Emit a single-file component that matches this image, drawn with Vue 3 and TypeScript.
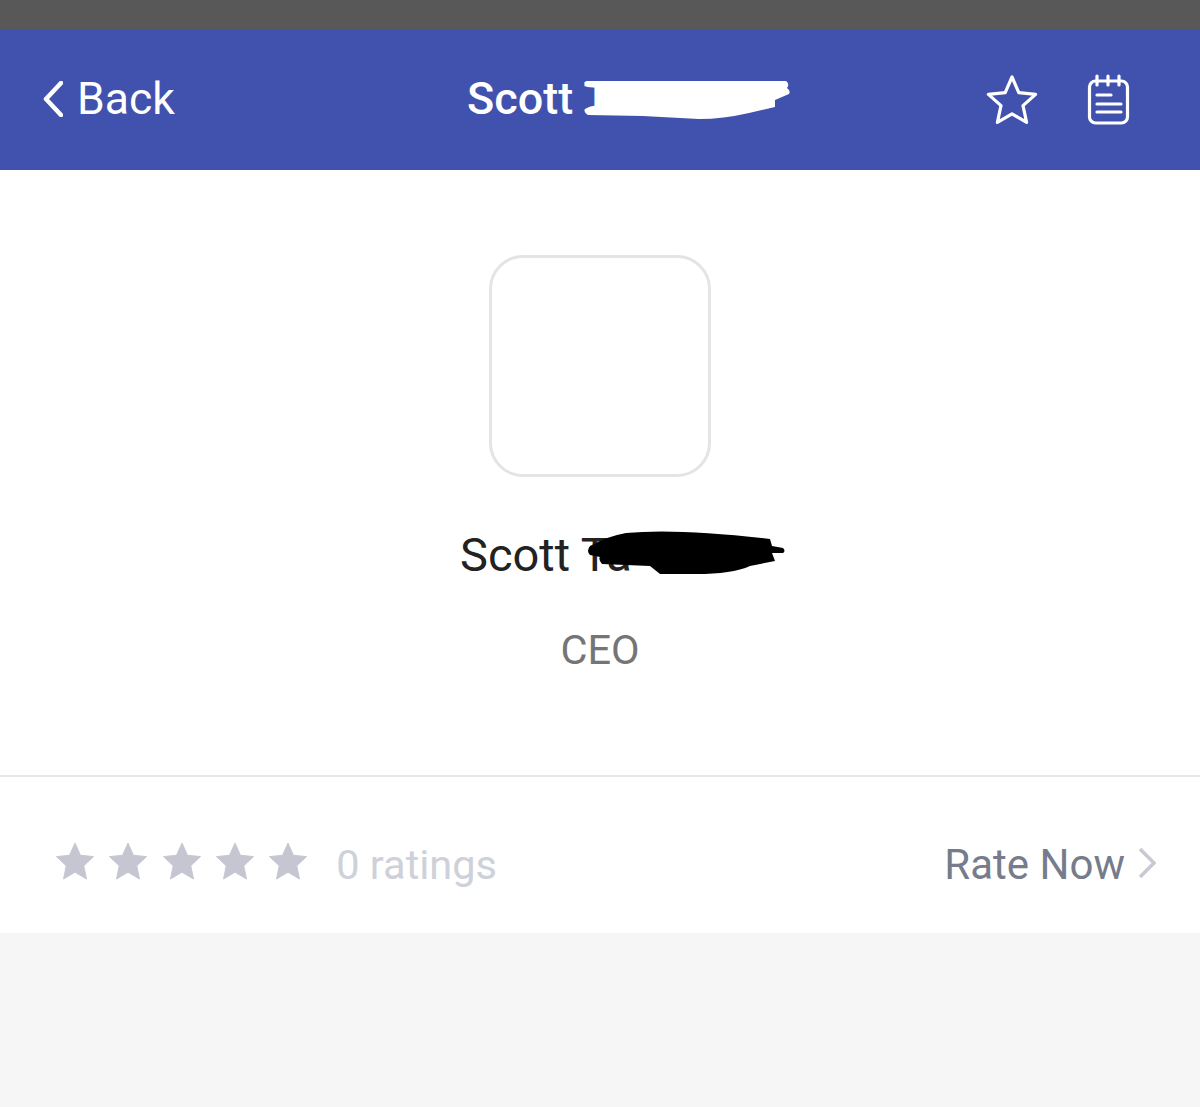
<script setup lang="ts">
const stars: number[] = [1, 2, 3, 4, 5];
const starPath = 'M20 1 L25.6 13.6 L39 15 L29 24.4 L31.8 38 L20 31 L8.2 38 L11 24.4 L1 15 L14.4 13.6 Z';
</script>

<template>
  <div class="page">
    <div class="status-bar"></div>

    <header class="nav">
      <div class="back">
        <svg class="back-icon" width="20" height="36" viewBox="0 0 20 36">
          <path d="M18 2 L3 18 L18 34" />
        </svg>
        <span>Back</span>
      </div>
      <div class="title">
        Scott T
        <!-- redaction scribble from the original screenshot -->
        <svg class="scribble" width="210" height="42" viewBox="0 0 210 42">
          <path class="fill-white" d="M3 2 H203 Q207 5 204 9 H204 Q208 12 206 15 L192 21 L192 28 L166 34 Q140 40 116 40 L60 37 L5 36 Q0 33 2 30 Q6 27 16 26 V9 L4 8 Q0 5 3 2 Z" />
        </svg>
      </div>
      <div class="actions">
        <svg width="54" height="52" viewBox="0 0 54 52">
          <path class="outline" d="M27 3 L33.8 18.6 L50.6 20.4 L38 31.6 L41.6 48.4 L27 39.8 L12.4 48.4 L16 31.6 L3.4 20.4 L20.2 18.6 Z" />
        </svg>
        <svg width="44" height="52" viewBox="0 0 44 52">
          <rect class="outline" x="3.5" y="7" width="38" height="42" rx="6" />
          <path class="outline" d="M11 2 V11 M22 2 V11 M33 2 V11 M11 21 H25 M11 30 H35 M11 38 H35" />
        </svg>
      </div>
    </header>

    <section class="profile">
      <div class="avatar"></div>
      <div class="name">
        Scott Ta
        <svg class="scribble" width="202" height="46" viewBox="0 0 202 46">
          <path class="fill-black" d="M4 17 Q22 7 40 4 Q90 -1 184 10 L186 17 L197 19 Q200 22 197 24 L186 24 L189 32 L164 37 Q146 45 110 45 L74 45 L64 37 L16 35 Q12 30 14 28 L4 26 Q0 22 4 17 Z" />
        </svg>
      </div>
      <div class="role">CEO</div>
    </section>

    <section class="ratings">
      <div class="stars">
        <svg v-for="s in stars" :key="s" width="40" height="38" viewBox="0 0 40 39">
          <path class="star" :d="starPath" />
        </svg>
      </div>
      <span class="count">0 ratings</span>
      <div class="rate-now">
        <span>Rate Now</span>
        <svg width="18" height="32" viewBox="0 0 18 32">
          <path d="M2 2 L16 16 L2 30" />
        </svg>
      </div>
    </section>

    <div class="rest"></div>
  </div>
</template>

<style>
html,
body {
  margin: 0;
  background: #f6f6f6;
}
</style>

<style scoped>
.page {
  display: flex;
  flex-direction: column;
  height: 1107px;
  font-family: Roboto, "Liberation Sans", sans-serif;
  overflow: hidden;
}

.status-bar {
  height: 30px;
  background: #585858;
}

.nav {
  height: 140px;
  box-sizing: border-box;
  padding: 0 70px 0 43px;
  background: #4152ae;
  color: #fff;
  display: flex;
  align-items: center;
}

.back {
  display: flex;
  align-items: center;
  gap: 14px;
  width: 424px;
  font-size: 44.5px;
  margin-top: -3px;
}

.back-icon path {
  fill: none;
  stroke: #fff;
  stroke-width: 4.5;
  stroke-linecap: round;
  stroke-linejoin: round;
}

.title {
  position: relative;
  font-size: 45px;
  font-weight: 500;
  white-space: nowrap;
  margin-top: -3px;
}

.scribble {
  position: absolute;
  display: block;
}

.title .scribble {
  left: 116px;
  top: 7px;
}

.fill-white {
  fill: #fff;
}

.fill-black {
  fill: #000;
}

.actions {
  margin-left: auto;
  display: flex;
  align-items: center;
  gap: 47px;
}

.outline {
  fill: none;
  stroke: #fff;
  stroke-width: 3.2;
  stroke-linecap: round;
  stroke-linejoin: round;
}

.profile {
  height: 607px;
  box-sizing: border-box;
  padding-top: 85px;
  background: #fff;
  border-bottom: 2px solid #e8e8e8;
  display: flex;
  flex-direction: column;
  align-items: center;
}

.avatar {
  width: 222px;
  height: 222px;
  box-sizing: border-box;
  border: 3px solid #e4e4e4;
  border-radius: 34px;
}

.name {
  position: relative;
  margin-top: 51px;
  width: 280px;
  font-size: 47px;
  color: #222;
  white-space: nowrap;
  line-height: 54px;
}

.name .scribble {
  left: 126px;
  top: 1px;
}

.role {
  margin-top: 45px;
  font-size: 41.5px;
  line-height: 46px;
  color: #757575;
}

.ratings {
  height: 156px;
  box-sizing: border-box;
  padding: 12px 44px 0 55px;
  background: #fff;
  display: flex;
  align-items: center;
}

.stars {
  display: flex;
  gap: 13.3px;
}

.star {
  fill: #c6c6d2;
  stroke: #c6c6d2;
  stroke-width: 1;
  stroke-linejoin: round;
}

.count {
  margin-left: 28px;
  margin-top: 6px;
  font-size: 41.5px;
  color: #ced0da;
}

.rate-now {
  margin-left: auto;
  margin-top: 6px;
  display: flex;
  align-items: center;
  gap: 13px;
  font-size: 42px;
  color: #767c8b;
}

.rate-now svg {
  margin-top: -3px;
}

.rate-now path {
  fill: none;
  stroke: #c9c9d3;
  stroke-width: 3.5;
}

.rest {
  flex: 1;
  background: #f6f6f6;
}
</style>
